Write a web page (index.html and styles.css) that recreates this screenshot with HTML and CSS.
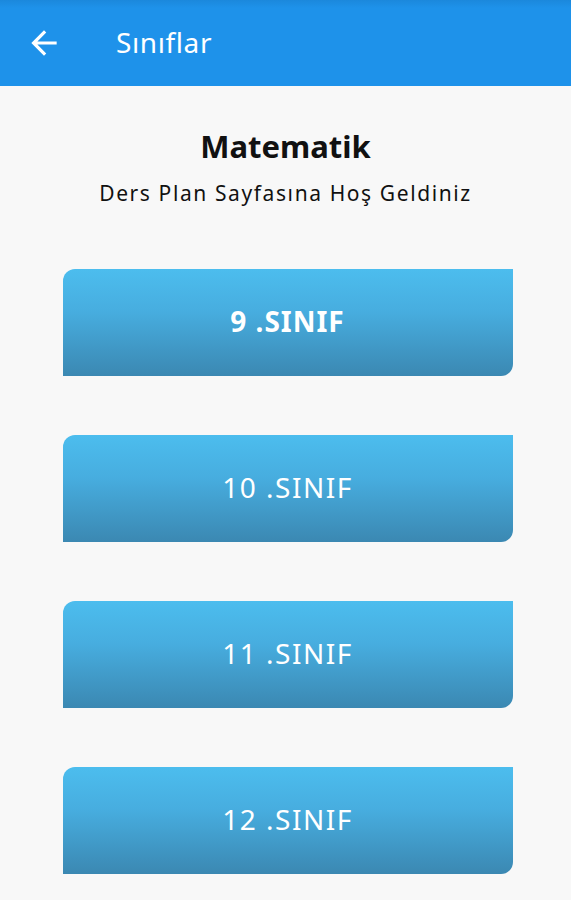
FILE: index.html
```html
<!DOCTYPE html>
<html lang="tr">
<head>
  <meta charset="UTF-8">
  <meta name="viewport" content="width=device-width, initial-scale=1.0">
  <title>Sınıflar</title>
  <link rel="stylesheet" href="styles.css">
</head>
<body>
  <div class="appbar">
    <svg class="back" width="38" height="38" viewBox="0 0 24 24">
      <path d="M20 11H7.83l5.59-5.59L12 4l-8 8 8 8 1.41-1.41L7.83 13H20v-2z" fill="#fff"/>
    </svg>
    <span class="appbar-title">Sınıflar</span>
  </div>

  <div class="content">
    <h1>Matematik</h1>
    <p class="subtitle">Ders Plan Sayfasına Hoş Geldiniz</p>

    <!-- Class buttons -->
    <div class="classes">
      <button class="class-btn active">9 .SINIF</button>
      <button class="class-btn">10 .SINIF</button>
      <button class="class-btn">11 .SINIF</button>
      <button class="class-btn">12 .SINIF</button>
    </div>
  </div>
</body>
</html>
```

FILE: styles.css
```css
body {
  margin: 0;
  padding: 0;
  font-family: "Noto Sans", "Open Sans", sans-serif;
  background-color: #f8f8f8;
  color: #111;
}
.appbar {
  height: 86px;
  background: linear-gradient(#1b88dc 0, #1e92ea 8px, #1e92ea 100%);
  display: flex;
  align-items: center;
  padding-left: 25px;
  box-sizing: border-box;
}
.back {
  display: block;
}
.appbar-title {
  color: #fff;
  font-size: 28px;
  letter-spacing: 0.6px;
  margin-left: 53px;
  margin-top: -2px;
}
.content {
  display: flex;
  flex-direction: column;
  align-items: center;
  padding-top: 39px;
}
h1 {
  margin: 0;
  font-size: 31px;
  font-weight: 700;
  line-height: 42px;
}
.subtitle {
  margin: 11px 0 0;
  font-size: 21px;
  letter-spacing: 1.6px;
  line-height: 30px;
}
.classes {
  display: flex;
  flex-direction: column;
  gap: 59px;
  margin-top: 61px;
  margin-left: 4px;
}
.class-btn {
  width: 450px;
  height: 107px;
  border: none;
  border-radius: 12px 0 12px 0;
  background: linear-gradient(#4cbdee, #47addf 40%, #3b88b2);
  color: #fff;
  font-family: "Noto Sans", "Open Sans", sans-serif;
  font-size: 28px;
  letter-spacing: 1.5px;
  padding: 0 0 4px;
  cursor: pointer;
}
.class-btn.active {
  font-weight: 700;
  letter-spacing: 1px;
}
```
